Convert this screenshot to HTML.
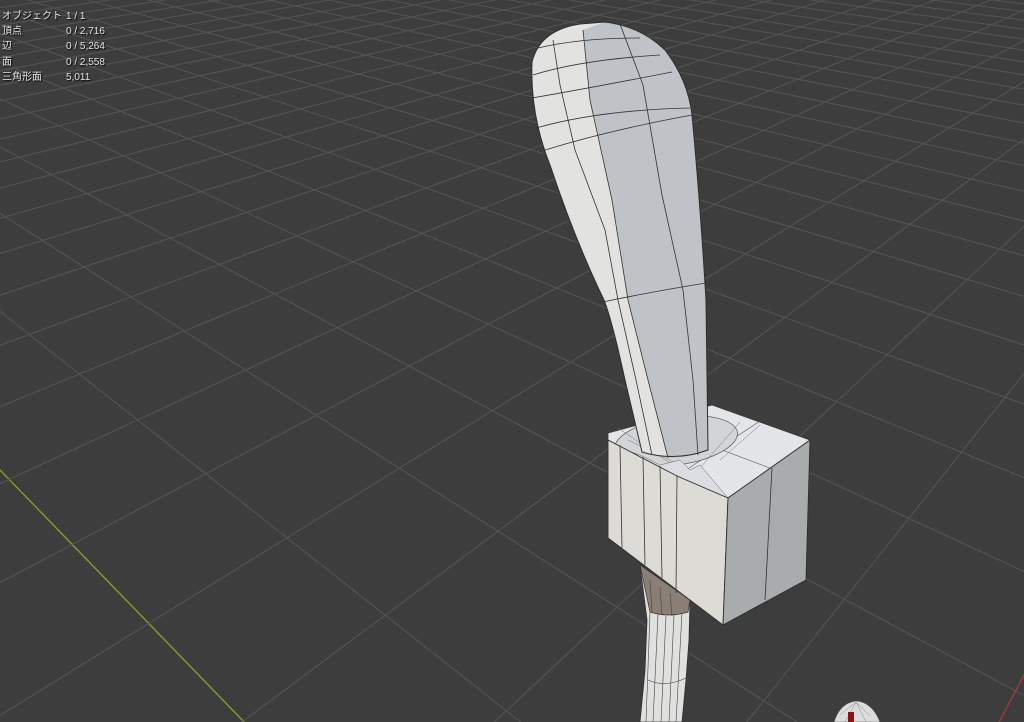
<!DOCTYPE html>
<html><head><meta charset="utf-8">
<style>
html,body{margin:0;padding:0;background:#3d3d3d;width:1024px;height:722px;overflow:hidden}
#c{position:absolute;left:0;top:0;display:block}
.t{position:absolute;font-family:"Liberation Sans","Noto Sans CJK JP",sans-serif;font-size:10px;color:#e4e4e4;text-shadow:1px 1px 1px #000;line-height:12px;white-space:nowrap}
</style></head><body>
<svg id="c" width="1024" height="722" viewBox="0 0 1024 722" xmlns="http://www.w3.org/2000/svg">
<rect width="1024" height="722" fill="#3d3d3d"/>
<g id="grid"></g>
<polygon points="608,433 712,405 810,440 728,498 677,476 608,440" fill="#e3e5e9" stroke="#3a3a3a" stroke-width="0.8"/>
<line x1="760" y1="421" x2="677" y2="476" stroke="#555" stroke-width="0.6"/>
<line x1="722" y1="450" x2="775" y2="470" stroke="#555" stroke-width="0.6"/>
<ellipse cx="676" cy="441" rx="62" ry="24" transform="rotate(-8 676 441)" fill="#d3d4d6" stroke="#555" stroke-width="0.7"/>
<path d="M618,428 L680,470 M628,440 L690,470 M700,468 L740,422 M720,460 L760,425" stroke="#777" stroke-width="0.5"/>
<path d="M532,62 Q540,30 580,24 L605,22 Q640,26 665,50 Q688,80 692,115 Q700,200 706,300 L708,450 Q675,462 642,452 L625,380 Q612,320 604,300 Q575,240 550,165 Q530,115 532,62 Z" fill="#e2e2e0"/>
<path d="M583,30 L590,100 L612,200 L628,300 L648,380 L668,458 Q690,458 708,450 L706,300 Q700,200 692,115 Q688,80 665,50 Q640,26 605,22 Z" fill="#bfc2c6"/>
<path d="M583,30 L590,100 L612,200 L628,300 L648,380 L668,458 M620,24 L643,85 L662,195 L683,290 L693,380 L698,455 M553,40 L560,85 L575,150 L605,230 L618,300 L636,380 L652,455" fill="none" stroke="#333" stroke-width="0.8"/>
<path d="M538,48 Q580,38 640,38 M533,75 Q580,60 660,55 M532,98 Q590,88 672,72 M536,128 Q600,110 690,108 M545,150 Q610,130 692,115 M598,303 Q650,292 706,283" fill="none" stroke="#333" stroke-width="0.8"/>
<path d="M532,62 Q540,30 580,24 L605,22 Q640,26 665,50 Q688,80 692,115 Q700,200 706,300 L708,450 Q675,462 642,452 L625,380 Q612,320 604,300 Q575,240 550,165 Q530,115 532,62 Z" fill="none" stroke="#2e2e2e" stroke-width="1"/>
<path d="M608,440 L677,476 L728,498 L700,465 L690,470 L680,460 L660,465 L640,455 L625,450 Z" fill="#dcdde2" stroke="#666" stroke-width="0.5"/>
<path d="M640,565 L690,600 L689,640 L686,680 L682,722 L640,722 L645,670 L647,620 Z" fill="#e0e0de" stroke="#2e2e2e" stroke-width="0.8"/>
<path d="M640,565 L690,600 L688,612 Q668,618 650,612 Z" fill="#8a7f74" stroke="#333" stroke-width="0.7"/>
<path d="M650,612 L646,722 M658,614 L653,722 M666,616 L661,722 M674,615 L669,722 M682,613 L676,722 M648,680 Q665,688 686,678 M650,580 L652,612 M660,587 L662,615 M670,593 L672,616" fill="none" stroke="#444" stroke-width="0.6"/>
<polygon points="608,440 677,476 728,498 723,625 608,538" fill="#dddbd6" stroke="#2e2e2e" stroke-width="0.9"/>
<path d="M620,445 L622,548 M643,457 L645,565 M660,466 L662,578 M677,476 L676,593" stroke="#333" stroke-width="0.8"/>
<polygon points="728,498 810,440 806,580 723,625" fill="#a8acad" stroke="#2e2e2e" stroke-width="0.9"/>
<path d="M772,468 L765,600" stroke="#333" stroke-width="0.8"/>
<path d="M834,722 Q840,703 856,701 Q872,702 880,722 Z" fill="#dcdcdc" stroke="#555" stroke-width="0.6"/>
<path d="M840,715 L856,702 L870,716 M845,722 L856,702 L866,722" stroke="#888" stroke-width="0.5" fill="none"/>
<rect x="848" y="712" width="6" height="10" fill="#8a1418"/>
</svg>
<div class="t" style="left:2px;top:11px">オブジェクト</div><div class="t" style="left:66px;top:11px">1 / 1</div>
<div class="t" style="left:2px;top:26px">頂点</div><div class="t" style="left:66px;top:26px">0 / 2,716</div>
<div class="t" style="left:2px;top:41px">辺</div><div class="t" style="left:66px;top:41px">0 / 5,264</div>
<div class="t" style="left:2px;top:57px">面</div><div class="t" style="left:66px;top:57px">0 / 2,558</div>
<div class="t" style="left:2px;top:72px">三角形面</div><div class="t" style="left:66px;top:72px">5,011</div>
<script>
(function(){
var F=900,cx=512,cy=361,phi=32*Math.PI/180,H=4.2;
var sp=Math.sin(phi),cp=Math.cos(phi);
function proj(x,z){var Zc=H*sp+z*cp,Yd=H*cp-z*sp;return [cx+F*x/Zc,cy+F*Yd/Zc,Zc];}
function unproj(u,v){var X=(u-cx)/F,Y=(v-cy)/F;var l=H/(Y*cp+sp);return [l*X,l*(-Y*sp+cp)];}
var aA=-47.6*Math.PI/180,aB=42.4*Math.PI/180;
var A=[Math.sin(aA),Math.cos(aA)],B=[Math.sin(aB),Math.cos(aB)];
function dot(p,q){return p[0]*q[0]+p[1]*q[1];}
var g0=unproj(0,470);var pb0=dot(g0,B);
var r0=unproj(1015,692);var pa0=dot(r0,A);
var out='';
function line(dir,perp,c,col,w){
 var pts=[];
 for(var t=-200;t<=200;t+=0.5){
  var x=perp[0]*c+dir[0]*t,z=perp[1]*c+dir[1]*t;
  var Zc=H*sp+z*cp; if(Zc<1) continue;
  if(Zc>60) continue;
  pts.push(proj(x,z));
 }
 if(pts.length<2)return;
 for(var i=0;i<pts.length-1;i+=4){
  var j=Math.min(i+4,pts.length-1);
  var d=pts[i][2];var op=Math.max(0,Math.min(1,1.4-d/45));
  if(op<=0)continue;
  out+='<line x1="'+pts[i][0].toFixed(1)+'" y1="'+pts[i][1].toFixed(1)+'" x2="'+pts[j][0].toFixed(1)+'" y2="'+pts[j][1].toFixed(1)+'" stroke="'+col+'" stroke-width="'+w+'" stroke-opacity="'+op.toFixed(2)+'"/>';
 }
}
for(var k=-50;k<=50;k++){
 var c=pb0+k; line(A,B,c,k==0?'#7ea02c':'#555555',k==0?1.4:1);
 var c2=pa0+k; line(B,A,c2,k==0?'#a03a3a':'#555555',k==0?1.4:1);
}
document.getElementById('grid').innerHTML=out;
})();
</script>
</body></html>
